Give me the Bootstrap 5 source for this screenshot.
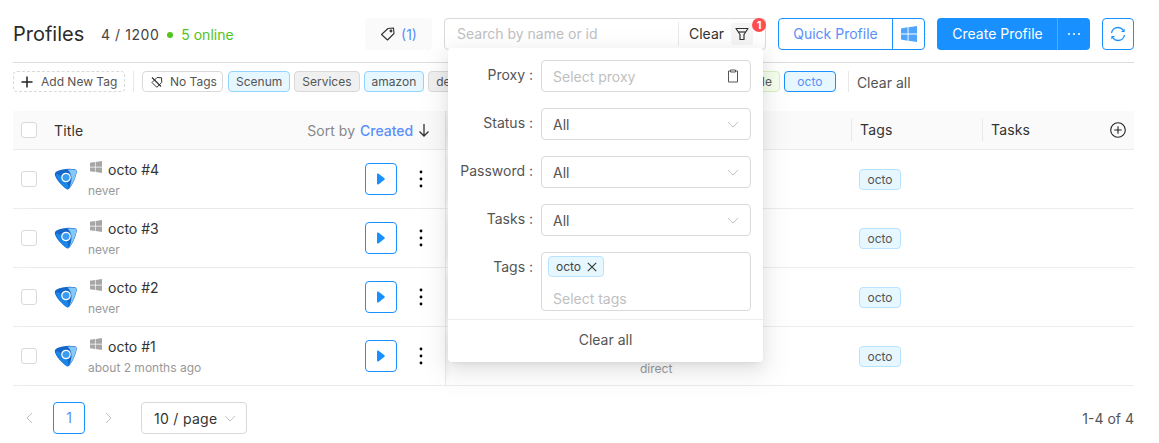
<!DOCTYPE html>
<html lang="en"><head><meta charset="utf-8"><title>Profiles</title>
<link href="https://cdn.jsdelivr.net/npm/bootstrap@5.3.0/dist/css/bootstrap.min.css" rel="stylesheet">
<style>
html,body{height:443px;overflow:hidden}
body{font-family:Inter,"Liberation Sans",sans-serif;font-size:14px;color:#333;background:#fff}
.pg{position:relative;width:1121px;margin-left:13px;height:443px}
.hd{padding-top:18px;border-bottom:1px solid #dcdcdc;height:44px;box-sizing:content-box}
.ttl{font-size:20px;line-height:32px;width:88px;color:#2b2b2b}
.cnt{line-height:34px;font-size:14px;letter-spacing:.55px;color:#444}
.dot{width:6px;height:6px;border-radius:50%;background:#52c41a;margin:14px 8px 0 8px}
.onl{color:#52c41a;line-height:34px}
.tagbtn{margin-left:auto;width:67px;height:32px;background:#fafafa;border-radius:4px;gap:5px;color:#5b8ff9}
.srch{position:relative;margin-left:12px;width:322px;height:32px;border:1px solid #d9d9d9;border-radius:4px}
.srch-ph{width:233px;padding-left:12px;color:#bfbfbf;line-height:30px}
.srch-clr{border-left:1px solid #e8e8e8;height:24px;line-height:24px;padding-left:10px;width:53px;color:#333}
.fnl{width:22px;height:22px;background:#f5f5f5;border-radius:3px}
.num{position:absolute;right:-1px;top:-1px;width:14px;height:14px;border-radius:50%;background:#ff4d4f;color:#fff;font-size:11px;line-height:14px;text-align:center;font-weight:700;z-index:5}
.qk{margin-left:12px;width:147px;height:32px;border:1px solid #1890ff;border-radius:4px;color:#5b8ff9}
.qk-t{width:114px;text-align:center;line-height:30px;border-right:1px solid #1890ff}
.qk-i{width:31px}
.cr{margin-left:12px;width:153px;height:32px;background:#1890ff;border-radius:4px;color:#fff}
.cr-t{width:121px;text-align:center;line-height:32px;border-right:1px solid #53aaff;padding-left:1px}
.cr-i{width:32px}
.rf{margin-left:12px;width:32px;height:32px;border:1px solid #1890ff;border-radius:4px}
.tgs{height:21px;margin-top:8px;gap:4px}
.tg{height:21px;border:1px solid #d9d9d9;border-radius:4px;background:#f0f0f0;font-size:12px;padding:0 7px;line-height:19px;color:#555;white-space:nowrap}
.tg svg{flex:none}
.tg-add{width:112px;background:#fff;border-style:dashed;color:#555;gap:8px;padding:0 0 0 7px;margin-right:4px}
.tg-no{width:81px;background:#fff;gap:7px;margin-left:4px;margin-right:1px;padding:0 0 0 8px}
.tg-bl{background:#e6f7ff;border-color:#91d5ff}
.tg-gn{background:#f6ffed;border-color:#d9f0c4;margin-left:234px}
.tg-oc{background:#e6f7ff;border-color:#1890ff;color:#5b8ff9;width:52px;text-align:center}
.vl{width:1px;height:21px;background:#e8e8e8}
.vl-e{margin-left:8px}
.clr-a{margin-left:4px;color:#555;line-height:24px}
.tb{margin-top:19px}
.tr{border-bottom:1px solid #ececec;height:59px}
.th{height:39px;background:#fafafa}
.c1{width:433px;padding-left:8px;height:100%;border-right:1px solid #e9e9e9;box-shadow:6px 0 8px -6px rgba(0,0,0,.08);position:relative}
.th .c1{border-right-color:#e4e4e4}
.c2{width:405px;height:100%;position:relative}
.c3{width:131px;padding-left:8px}
.c4{width:152px;padding-left:8px}
.th .c3,.th .c4{border-left:1px solid #e8e8e8;height:22px;line-height:22px;letter-spacing:.15px}
.cbx{width:16px;height:16px;border:1px solid #d9d9d9;border-radius:3px;background:#fff;flex:none}
.lbl{margin-left:17px;color:#333;letter-spacing:.15px}
.srt{margin-left:auto;color:#888;margin-right:15px;gap:5px;letter-spacing:.05px}
.srt b{font-weight:500;color:#5b8ff9;letter-spacing:-.05px}
.ad{margin-right:8px}
.lgo{margin-left:17px;margin-right:10px;flex:none}
.nm{line-height:20px;gap:6px}
.wn{margin-top:-6px;margin-left:2px}
.sb{font-size:12px;color:#999;line-height:15px;margin-top:3px}
.ply{margin-left:auto;width:32px;height:32px;border:1px solid #1890ff;border-radius:4px;flex:none}
.mr{width:4px;margin:0 22px 0 22px;flex:none}
.ctg{display:inline-block;height:21px;width:42px;text-align:center;background:#e6f7ff;border:1px solid #b8e3ff;border-radius:4px;font-size:12px;line-height:19px;color:#555}
.drct{position:absolute;left:194px;top:33px;font-size:12px;color:#999}
.pgn{margin-top:16px;height:32px}
.pv{margin-left:12px}
.pg-no{width:32px;height:32px;border:1px solid #1890ff;border-radius:4px;color:#5b8ff9;text-align:center;line-height:30px;margin:0 20px}
.pg-sz{margin-left:28px;width:106px;height:32px;border:1px solid #d9d9d9;border-radius:4px;padding-left:12px;gap:7px;letter-spacing:.3px}
.pg-to{margin-left:auto;color:#555}
.pop{position:absolute;left:435px;top:48px;width:315px;height:314px;background:#fff;border-radius:4px;box-shadow:0 3px 6px -4px rgba(0,0,0,.12),0 6px 16px 0 rgba(0,0,0,.08),0 9px 28px 8px rgba(0,0,0,.05);z-index:3;padding-top:12px}
.f-r{height:32px;margin-bottom:16px}
.f-l{width:93px;padding-right:8px;margin-bottom:4px;text-align:right;color:#555;font-size:14px;flex:none}
.f-c{width:210px;height:32px;border:1px solid #d9d9d9;border-radius:4px;padding:0 11px;color:#555}
.ph{color:#bfbfbf}
.f-c .ph{padding-top:1px}
.f-ts{height:59px}
.f-lt{line-height:30px}
.f-ta{width:210px;height:59px;border:1px solid #d9d9d9;border-radius:4px;padding:3px 6px}
.f-tg{width:56px;height:21px;background:#e6f7ff;border:1px solid #b8e3ff;border-radius:4px;font-size:12px;padding-left:7px;gap:6px;color:#444}
.f-pl{padding-left:5px;margin-top:12px;line-height:20px}
.f-ft{margin-top:8px;border-top:1px solid #ececec;height:42px;line-height:40px;text-align:center;color:#555}
</style></head>
<body>
<svg width="0" height="0" class="position-absolute"><defs>
<symbol id="win" viewBox="0 0 16 16"><path d="M0 2.400 6.600 1.300V7.500H0ZM7.500 1.200 16 0V7.500H7.500ZM0 8.500H6.600V14.700L0 13.600ZM7.500 8.500H16V16L7.500 14.800Z"/></symbol>
<symbol id="chv" viewBox="0 0 14 8"><path d="M1 1l6 6 6-6" fill="none" stroke="#bfbfbf" stroke-width="1.100"/></symbol>
<symbol id="lg" viewBox="0 0 24 24"><path d="M2.500 4.500C8 1.500 16 1 21 2.300c1.700.5 2 1.700 1.700 3.200-1 5-3.700 11.500-7 15.800-1 1.300-2.300 1.400-3.500.5C8 18.500 3 14 1 8.500.5 6.800 1 5.300 2.500 4.500Z" fill="#1467c9"/><path d="M13.500 2.600c3.500-.4 7 0 9 .8-.4 5.800-3.600 12.800-7.300 18 1.600-4.200 2.300-6.500 2.300-10.400 0-3-1.500-6.200-4-8.400Z" fill="#85c9fb"/><path d="M1.500 7.500c4.500-1.200 7.500 4.500 12.200 8.500l1 5.800c-1 .9-2 .6-3-.3C8 18 3.200 13.300 1.500 7.500Z" fill="#1a86e8"/><circle cx="12" cy="10.500" r="4.200" fill="#3b9df2" stroke="#fff" stroke-width="1.200"/></symbol>
<symbol id="ply" viewBox="0 0 8 12"><path d="M1.400.6 7.400 5.300c.5.4.5 1 0 1.400L1.400 11.400C.8 11.800 0 11.500 0 10.800V1.200C0 .5.800.2 1.400.6Z" fill="#1890ff"/></symbol>
<symbol id="dts" viewBox="0 0 4 18"><circle cx="2" cy="2" r="1.400"/><circle cx="2" cy="9" r="1.400"/><circle cx="2" cy="16" r="1.400"/></symbol>
</defs></svg>
<div class="pg">
 <div class="hd d-flex align-items-start">
  <div class="ttl">Profiles</div>
  <div class="cnt">4 / 1200</div>
  <span class="dot"></span>
  <div class="onl">5 online</div>
  <div class="tagbtn d-flex align-items-center justify-content-center">
   <svg width="16" height="16" viewBox="0 0 16 16" fill="none" stroke="#333" stroke-width="1.100"><path d="M1.500 8.500 8 2.500l5.500-.5.500 5.500-6.500 6.500Z" stroke-linejoin="round"/><circle cx="11" cy="5" r=".9"/></svg><span>(1)</span>
  </div>
  <div class="srch d-flex align-items-center">
   <div class="srch-ph">Search by name or id</div>
   <div class="srch-clr">Clear</div>
   <div class="fnl d-flex align-items-center justify-content-center"><svg width="14" height="14" viewBox="0 0 14 14" fill="none" stroke="#333" stroke-width="1.200"><path d="M1 1.500H13L9 7.500V12.500H5V7.500Z" stroke-linejoin="round"/><path d="M3.500 5H10.500"/></svg></div>
   <span class="num">1</span>
  </div>
  <div class="qk d-flex align-items-center">
   <div class="qk-t">Quick Profile</div>
   <div class="qk-i d-flex justify-content-center"><svg width="16" height="16" fill="#4ea5fb"><use href="#win"/></svg></div>
  </div>
  <div class="cr d-flex">
   <div class="cr-t">Create Profile</div>
   <div class="cr-i d-flex align-items-center justify-content-center"><svg width="14" height="4" viewBox="0 0 14 4" fill="#fff"><circle cx="2" cy="2" r="1"/><circle cx="7" cy="2" r="1"/><circle cx="12" cy="2" r="1"/></svg></div>
  </div>
  <div class="rf d-flex align-items-center justify-content-center"><svg width="16" height="16" viewBox="0 0 16 16" fill="none" stroke="#1890ff" stroke-width="1.400"><path d="M1.500 7C2 4 4.700 1.500 8 1.500c2 0 3.800.9 5 2.400"/><path d="M14.500 9c-.5 3-3.200 5.500-6.500 5.500-2 0-3.800-.9-5-2.400"/><path d="M14.600 2.500V6H11Z" fill="#1890ff" stroke="none"/><path d="M1.400 13.500V10H5Z" fill="#1890ff" stroke="none"/></svg></div>
 </div>

 <div class="tgs d-flex align-items-start">
  <div class="tg tg-add d-flex align-items-center"><svg width="12" height="12" viewBox="0 0 12 12" stroke="#222" stroke-width="1.500"><path d="M6 .5v11M.5 6h11"/></svg><span>Add New Tag</span></div>
  <span class="vl"></span>
  <div class="tg tg-no d-flex align-items-center"><svg width="12" height="12" viewBox="0 0 12 12" fill="none" stroke="#333"><path d="M1 6.500 6 1.500l4.500.3.300 4.500-5 5Z"/><path d="M1 1.500 10 10.500" stroke-width="1.200"/></svg><span>No Tags</span></div>
  <span class="tg tg-bl">Scenum</span>
  <span class="tg">Services</span>
  <span class="tg tg-bl">amazon</span>
  <span class="tg">default</span>
  <span class="tg tg-gn">Sample</span>
  <span class="tg tg-oc">octo</span>
  <span class="vl vl-e"></span>
  <span class="clr-a">Clear all</span>
 </div>

 <div class="tb">
  <div class="tr th d-flex align-items-center">
   <div class="c1 d-flex align-items-center"><span class="cbx"></span><span class="lbl">Title</span><span class="srt d-flex align-items-center">Sort by <b>Created</b><svg width="12" height="14" viewBox="0 0 12 14" fill="none" stroke="#333" stroke-width="1.300"><path d="M6 1v12M1.500 8.500 6 13l4.500-4.500"/></svg></span></div>
   <div class="c2"></div>
   <div class="c3">Tags</div>
   <div class="c4 d-flex align-items-center"><span>Tasks</span><svg class="ms-auto ad" width="16" height="16" viewBox="0 0 16 16" fill="none" stroke="#222" stroke-width="1.100"><circle cx="8" cy="8" r="7.300"/><path d="M8 4.300v7.400M4.300 8h7.400"/></svg></div>
  </div>
  <div class="tr d-flex align-items-center">
   <div class="c1 d-flex align-items-center"><span class="cbx"></span><svg class="lgo" width="24" height="24"><use href="#lg"/></svg><div><div class="nm d-flex align-items-center"><svg class="wn" width="12" height="12" fill="#a6a6a6"><use href="#win"/></svg>octo #4</div><div class="sb">never</div></div><span class="ply d-flex align-items-center justify-content-center"><svg width="8" height="12"><use href="#ply"/></svg></span><svg class="mr" width="4" height="18" viewBox="0 0 4 18"><use href="#dts"/></svg></div>
   <div class="c2"></div><div class="c3"><span class="ctg">octo</span></div><div class="c4"></div>
  </div>
  <div class="tr d-flex align-items-center">
   <div class="c1 d-flex align-items-center"><span class="cbx"></span><svg class="lgo" width="24" height="24"><use href="#lg"/></svg><div><div class="nm d-flex align-items-center"><svg class="wn" width="12" height="12" fill="#a6a6a6"><use href="#win"/></svg>octo #3</div><div class="sb">never</div></div><span class="ply d-flex align-items-center justify-content-center"><svg width="8" height="12"><use href="#ply"/></svg></span><svg class="mr" width="4" height="18" viewBox="0 0 4 18"><use href="#dts"/></svg></div>
   <div class="c2"></div><div class="c3"><span class="ctg">octo</span></div><div class="c4"></div>
  </div>
  <div class="tr d-flex align-items-center">
   <div class="c1 d-flex align-items-center"><span class="cbx"></span><svg class="lgo" width="24" height="24"><use href="#lg"/></svg><div><div class="nm d-flex align-items-center"><svg class="wn" width="12" height="12" fill="#a6a6a6"><use href="#win"/></svg>octo #2</div><div class="sb">never</div></div><span class="ply d-flex align-items-center justify-content-center"><svg width="8" height="12"><use href="#ply"/></svg></span><svg class="mr" width="4" height="18" viewBox="0 0 4 18"><use href="#dts"/></svg></div>
   <div class="c2"></div><div class="c3"><span class="ctg">octo</span></div><div class="c4"></div>
  </div>
  <div class="tr d-flex align-items-center">
   <div class="c1 d-flex align-items-center"><span class="cbx"></span><svg class="lgo" width="24" height="24"><use href="#lg"/></svg><div><div class="nm d-flex align-items-center"><svg class="wn" width="12" height="12" fill="#a6a6a6"><use href="#win"/></svg>octo #1</div><div class="sb">about 2 months ago</div></div><span class="ply d-flex align-items-center justify-content-center"><svg width="8" height="12"><use href="#ply"/></svg></span><svg class="mr" width="4" height="18" viewBox="0 0 4 18"><use href="#dts"/></svg></div>
   <div class="c2"><span class="drct">direct</span></div><div class="c3"><span class="ctg">octo</span></div><div class="c4"></div>
  </div>
 </div>

 <div class="pgn d-flex align-items-center">
  <svg class="pv" width="8" height="12" viewBox="0 0 8 12" fill="none" stroke="#bfbfbf"><path d="M7 1 2 6l5 5"/></svg>
  <div class="pg-no">1</div>
  <svg width="8" height="12" viewBox="0 0 8 12" fill="none" stroke="#bfbfbf"><path d="M1 1l5 5-5 5"/></svg>
  <div class="pg-sz d-flex align-items-center"><span>10 / page</span><svg width="12" height="7"><use href="#chv"/></svg></div>
  <div class="pg-to">1-4 of 4</div>
 </div>

 <div class="pop">
  <div class="f-r d-flex align-items-center"><div class="f-l">Proxy :</div><div class="f-c d-flex align-items-center justify-content-between"><span class="ph">Select proxy</span><svg width="12" height="14" viewBox="0 0 12 14" fill="none" stroke="#555"><path d="M3.500 2H1.500V13H10.500V2H8.500"/><path d="M3.500 1H8.500V3H3.500Z"/></svg></div></div>
  <div class="f-r d-flex align-items-center"><div class="f-l">Status :</div><div class="f-c d-flex align-items-center justify-content-between"><span>All</span><svg width="12" height="7"><use href="#chv"/></svg></div></div>
  <div class="f-r d-flex align-items-center"><div class="f-l">Password :</div><div class="f-c d-flex align-items-center justify-content-between"><span>All</span><svg width="12" height="7"><use href="#chv"/></svg></div></div>
  <div class="f-r d-flex align-items-center"><div class="f-l">Tasks :</div><div class="f-c d-flex align-items-center justify-content-between"><span>All</span><svg width="12" height="7"><use href="#chv"/></svg></div></div>
  <div class="f-ts d-flex align-items-start"><div class="f-l f-lt">Tags :</div><div class="f-ta"><div class="f-tg d-flex align-items-center"><span>octo</span><svg width="10" height="10" viewBox="0 0 10 10" stroke="#333" stroke-width="1.100"><path d="M.8.8l8.400 8.400M9.200.8.800 9.200"/></svg></div><div class="ph f-pl">Select tags</div></div></div>
  <div class="f-ft">Clear all</div>
 </div>
</div>
</body></html>
